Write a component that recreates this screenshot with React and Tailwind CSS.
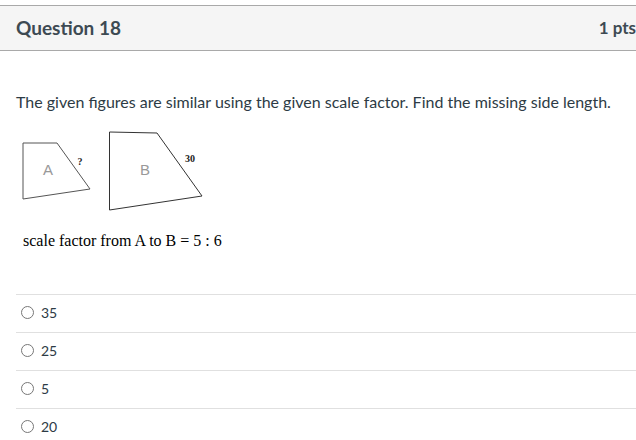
import React from "react";

const answers = ["35", "25", "5", "20"];

function Figures() {
  return (
    <svg width="200" height="90" viewBox="0 0 200 90" className="block">
      <g transform="translate(-16,-125)">
        <polygon points="23,143 57,143 90,189 23,199" fill="white" stroke="#555" strokeWidth="1" />
        <polygon points="109.5,132 157,133 202,196 109.5,210" fill="white" stroke="#333" strokeWidth="1" />
        <text x="48" y="175" fontSize="15" fill="#999" textAnchor="middle" fontFamily="Liberation Sans, Arial, sans-serif">A</text>
        <text x="145" y="175" fontSize="15" fill="#999" textAnchor="middle" fontFamily="Liberation Sans, Arial, sans-serif">B</text>
        <text x="80" y="165" fontSize="10" fontWeight="bold" fill="#222" textAnchor="middle" fontFamily="Liberation Serif, serif">?</text>
        <text x="190" y="162" fontSize="10" fontWeight="bold" fill="#222" textAnchor="middle" fontFamily="Liberation Serif, serif">30</text>
      </g>
    </svg>
  );
}

export default function App() {
  return (
    <div className="w-[636px] h-[440px] overflow-hidden bg-white font-['Lato','Noto_Sans',sans-serif] text-[#2d3b45]">
      <div className="w-[652px] pt-[5px]">
        <div className="h-[46px] border-y border-[#a9a9a9] bg-[#f5f5f5] flex items-center justify-between px-4">
          <span className="text-[19px] font-bold text-[#3d4a53]">Question 18</span>
          <span className="text-[17px] font-bold text-[#3d4a53]">1 pts</span>
        </div>
        <div className="px-4">
          <p className="mt-[39px] text-[16px] leading-6">
            The given figures are similar using the given scale factor. Find the missing side length.
          </p>
          <div className="mt-[11px]">
            <Figures />
          </div>
          <p className="mt-[16px] pl-[7px] text-[16px] leading-5 text-black font-['Liberation_Serif',serif]">
            scale factor from A to B = 5 : 6
          </p>
          <div className="mt-[43px]">
            {answers.map((a) => (
              <div key={a} className="h-[38px] border-t border-[#e0e0e0] flex items-center pl-[5px] pb-[3px]">
                <span className="w-[13px] h-[13px] rounded-full border border-[#777] bg-white"></span>
                <span className="ml-[7px] text-[14px] text-[#2d3b45]">{a}</span>
              </div>
            ))}
          </div>
        </div>
      </div>
    </div>
  );
}
